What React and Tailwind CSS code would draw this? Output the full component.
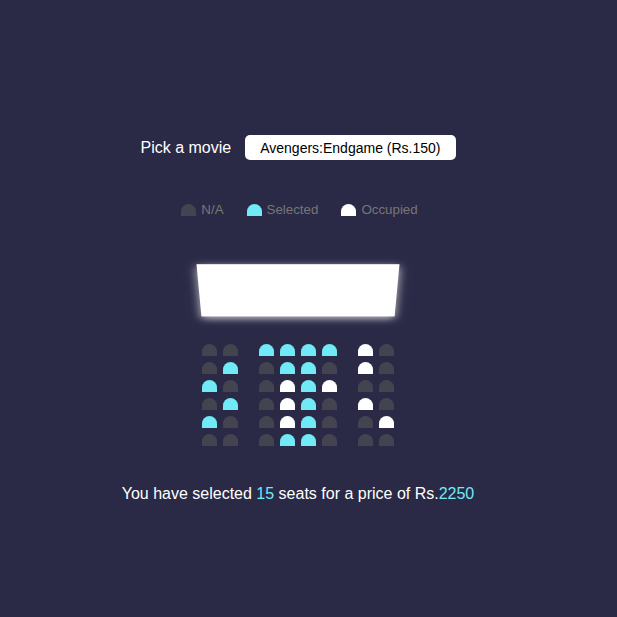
import React from "react";

const rows = [
  ["N", "N", "S", "S", "S", "S", "O", "N"],
  ["N", "S", "N", "S", "S", "N", "O", "N"],
  ["S", "N", "N", "O", "S", "O", "N", "N"],
  ["N", "S", "N", "O", "S", "N", "O", "N"],
  ["S", "N", "N", "O", "S", "N", "N", "O"],
  ["N", "N", "N", "S", "S", "N", "N", "N"],
];

function Seat({ kind, extra = "" }) {
  const color =
    kind === "S" ? "bg-[#6feaf6]" : kind === "O" ? "bg-white" : "bg-[#444451]";
  return (
    <div
      className={`h-[12px] w-[15px] m-[3px] rounded-t-[10px] ${color} ${extra}`}
    />
  );
}

export default function App() {
  return (
    <div
      className="min-h-[617px] w-full bg-[#2a2946] text-white"
      style={{ fontFamily: '"Liberation Sans", Arial, sans-serif' }}
    >
      <div className="w-[596px] flex flex-col items-center pt-[135px]">
        <div className="flex items-center h-[25px]">
          <span className="text-[16px]">Pick a movie</span>
          <div className="ml-[14px] bg-white text-black text-[14px] leading-[16px] rounded-[5px] px-[15px] py-[4.5px]">
            Avengers:Endgame (Rs.150)
          </div>
        </div>

        <ul className="mt-[35px] flex rounded-[5px] px-[10px] py-[5px] text-[#777]">
          <li className="flex items-center mx-[10px]">
            <Seat kind="N" />
            <small className="ml-[2px] text-[13.33px]">N/A</small>
          </li>
          <li className="flex items-center mx-[10px]">
            <Seat kind="S" />
            <small className="ml-[2px] text-[13.33px]">Selected</small>
          </li>
          <li className="flex items-center mx-[10px]">
            <Seat kind="O" />
            <small className="ml-[2px] text-[13.33px]">Occupied</small>
          </li>
        </ul>

        <div className="mt-[16px] perspective-[1000px]">
          <div className="h-[70px] w-full my-[15px] bg-white rotate-x-[-45deg] shadow-[0_3px_10px_rgba(255,255,255,0.75)]" />
          {rows.map((r, i) => (
            <div key={i} className="flex">
              {r.map((k, j) => (
                <Seat
                  key={j}
                  kind={k}
                  extra={j === 1 ? "mr-[18px]" : j === 6 ? "ml-[18px]" : ""}
                />
              ))}
            </div>
          ))}
        </div>

        <p className="mt-[33px] text-[16px]">
          You have selected <span className="text-[#6feaf6]">15</span> seats
          for a price of Rs.<span className="text-[#6feaf6]">2250</span>
        </p>
      </div>
    </div>
  );
}
